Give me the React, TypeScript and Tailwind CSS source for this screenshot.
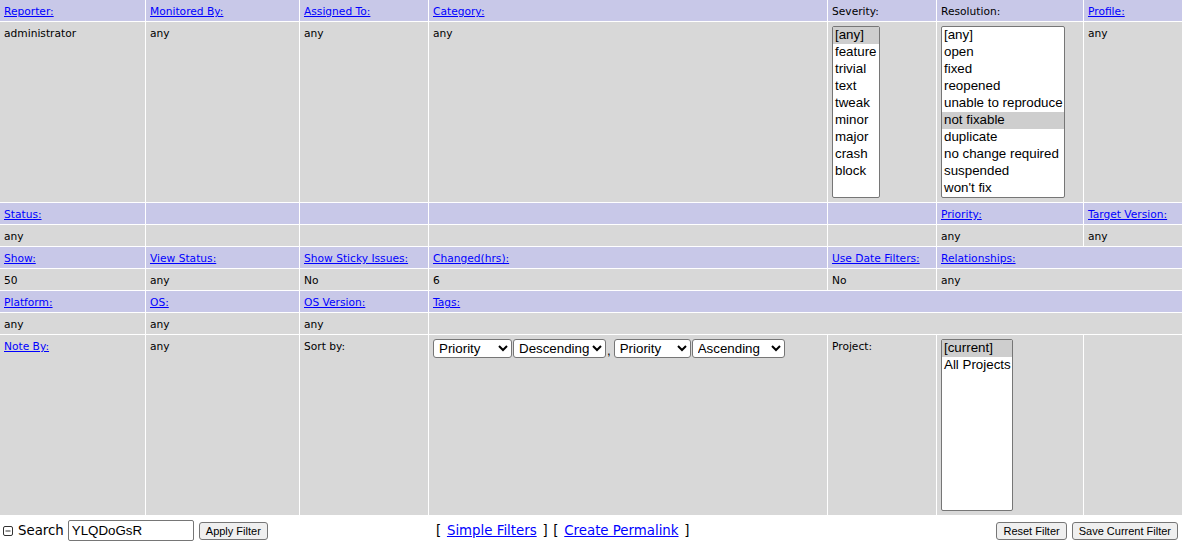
import React from "react";

const cols = "grid-cols-[145px_153px_128px_398px_108px_146px_98px]";

function Head({ children, link = true, span = "" }: { children?: React.ReactNode; link?: boolean; span?: string }) {
  return (
    <div className={`bg-[#c8c8e8] h-[21px] px-1 pt-[5px] leading-[13px] ${span}`}>
      {children &&
        (link ? <a href="#" className="text-[#0000ff] underline">{children}</a> : <span>{children}</span>)}
    </div>
  );
}

function Cell({ children, span = "", box = false }: { children?: React.ReactNode; span?: string; box?: boolean }) {
  return (
    <div className={`bg-[#d8d8d8] h-auto min-h-[21px] px-1 leading-[13px] ${box ? "py-1" : "pt-[5px] pb-[3px]"} ${span}`}>
      {children}
    </div>
  );
}

function ListBox({ items, selected, width }: { items: string[]; selected: string; width: string }) {
  return (
    <div
      className={`${width} h-[172px] overflow-hidden rounded-[2px] border border-[#767676] bg-white font-['Liberation_Sans',Arial,sans-serif] text-[13.33px] text-black`}
    >
      {items.map((item) => (
        <div
          key={item}
          className={`h-[17px] whitespace-nowrap px-[2px] leading-[16px] ${item === selected ? "bg-[#cecece]" : ""}`}
        >
          {item}
        </div>
      ))}
    </div>
  );
}

function Dropdown({ value, width }: { value: string; width: string }) {
  return (
    <select
      defaultValue={value}
      className={`${width} h-[19px] rounded-[3px] border border-[#767676] bg-white pl-[1px] font-['Liberation_Sans',Arial,sans-serif] text-[13.33px] text-black`}
    >
      <option>Priority</option>
      <option>Descending</option>
      <option>Ascending</option>
      <option>Severity</option>
      <option>Status</option>
    </select>
  );
}

function CollapseIcon() {
  return (
    <svg width="10" height="10" viewBox="0 0 10 10" className="mr-[5px] inline-block">
      <rect x="0.5" y="0.5" width="9" height="9" rx="1.5" fill="white" stroke="#333" />
      <path d="M2.5 5h5" stroke="#333" strokeWidth="1" />
    </svg>
  );
}

function Button({ children }: { children: React.ReactNode }) {
  return (
    <button className="h-[18px] rounded-[3px] border border-[#767676] bg-[#efefef] px-[6px] font-['Liberation_Sans',Arial,sans-serif] text-[11px] leading-[16px] text-black">
      {children}
    </button>
  );
}

export default function App() {
  return (
    <div className="w-[1182px] bg-white font-['DejaVu_Sans',Verdana,sans-serif] text-[10.67px] text-black">
      {/* Filter table */}
      <div className={`grid ${cols} gap-px bg-white`}>
        <Head>Reporter:</Head>
        <Head>Monitored By:</Head>
        <Head>Assigned To:</Head>
        <Head>Category:</Head>
        <Head link={false}>Severity:</Head>
        <Head link={false}>Resolution:</Head>
        <Head>Profile:</Head>

        <Cell>administrator</Cell>
        <Cell>any</Cell>
        <Cell>any</Cell>
        <Cell>any</Cell>
        <Cell box>
          <ListBox
            width="w-[48px]"
            selected="[any]"
            items={["[any]", "feature", "trivial", "text", "tweak", "minor", "major", "crash", "block"]}
          />
        </Cell>
        <Cell box>
          <ListBox
            width="w-[124px]"
            selected="not fixable"
            items={[
              "[any]",
              "open",
              "fixed",
              "reopened",
              "unable to reproduce",
              "not fixable",
              "duplicate",
              "no change required",
              "suspended",
              "won't fix",
            ]}
          />
        </Cell>
        <Cell>any</Cell>

        <Head>Status:</Head>
        <Head />
        <Head />
        <Head />
        <Head />
        <Head>Priority:</Head>
        <Head>Target Version:</Head>

        <Cell>any</Cell>
        <Cell />
        <Cell />
        <Cell />
        <Cell />
        <Cell>any</Cell>
        <Cell>any</Cell>

        <Head>Show:</Head>
        <Head>View Status:</Head>
        <Head>Show Sticky Issues:</Head>
        <Head>Changed(hrs):</Head>
        <Head>Use Date Filters:</Head>
        <Head span="col-span-2">Relationships:</Head>

        <Cell>50</Cell>
        <Cell>any</Cell>
        <Cell>No</Cell>
        <Cell>6</Cell>
        <Cell>No</Cell>
        <Cell span="col-span-2">any</Cell>

        <Head>Platform:</Head>
        <Head>OS:</Head>
        <Head>OS Version:</Head>
        <Head span="col-span-4">Tags:</Head>

        <Cell>any</Cell>
        <Cell>any</Cell>
        <Cell>any</Cell>
        <Cell span="col-span-4" />

        <Cell>
          <a href="#" className="text-[#0000ff] underline">Note By:</a>
        </Cell>
        <Cell>any</Cell>
        <Cell>Sort by:</Cell>
        <Cell box>
          <div className="flex items-end">
            <Dropdown value="Priority" width="w-[79px]" />
            <span className="ml-[1px]" />
            <Dropdown value="Descending" width="w-[93px]" />
            <span className="ml-[1px] font-['Liberation_Sans',Arial,sans-serif] text-[13.33px] leading-[15px]">,</span>
            <span className="ml-[3px]" />
            <Dropdown value="Priority" width="w-[77px]" />
            <span className="ml-[1px]" />
            <Dropdown value="Ascending" width="w-[93px]" />
          </div>
        </Cell>
        <Cell>Project:</Cell>
        <Cell box>
          <ListBox width="w-[72px]" selected="[current]" items={["[current]", "All Projects"]} />
        </Cell>
        <Cell />
      </div>

      {/* Footer */}
      <div className="grid h-[31px] grid-cols-[436px_1fr_auto] items-center pr-1 text-[13.33px]">
        <div className="flex items-center pl-[3px]">
          <CollapseIcon />
          <span className="mr-[4px]">Search</span>
          <input
            defaultValue="YLQDoGsR"
            className="h-[21px] w-[126px] rounded-[2px] border border-[#767676] bg-white px-[3px] font-['Liberation_Sans',Arial,sans-serif] text-[13.33px] text-black"
          />
          <span className="ml-[5px]" />
          <Button>Apply Filter</Button>
        </div>
        <div className="[word-spacing:1.5px]">
          [ <a href="#" className="text-[#0000ff] underline [word-spacing:0]">Simple Filters</a> ] [{" "}
          <a href="#" className="text-[#0000ff] underline [word-spacing:0]">Create Permalink</a> ]
        </div>
        <div className="flex items-center gap-[5px]">
          <Button>Reset Filter</Button>
          <Button>Save Current Filter</Button>
        </div>
      </div>
    </div>
  );
}
